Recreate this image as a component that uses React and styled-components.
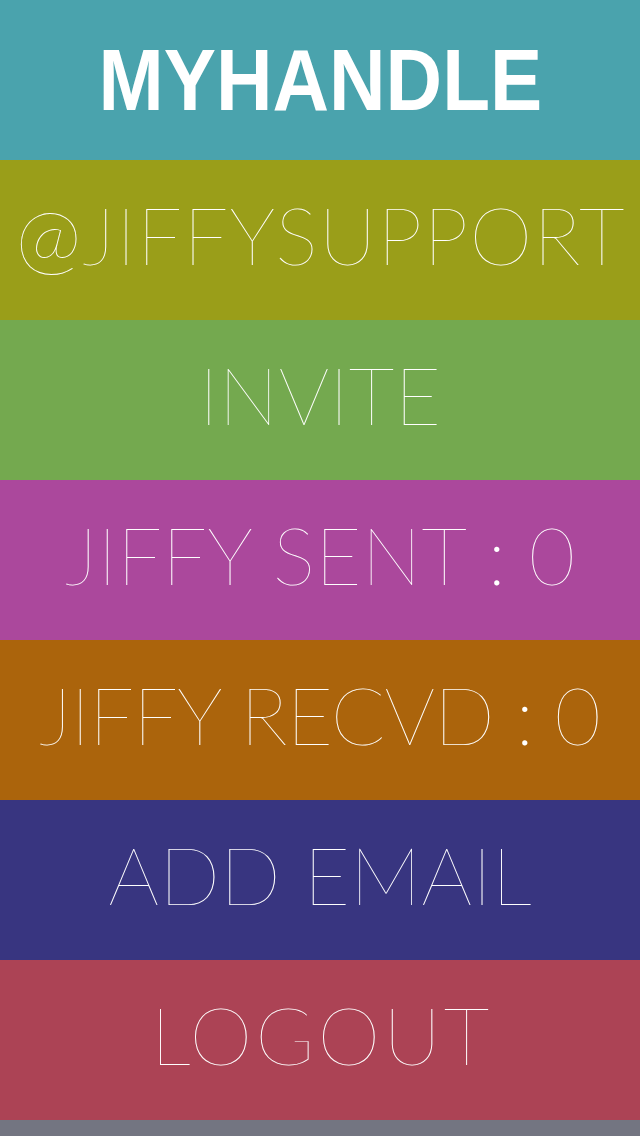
import React from "react";
import styled, { createGlobalStyle } from "styled-components";

const Global = createGlobalStyle`
  html, body { margin: 0; padding: 0; background: #737581; }
  * { box-sizing: border-box; }
`;

const Screen = styled.div`
  width: 640px;
  height: 1136px;
  display: flex;
  flex-direction: column;
  background: #737581;
  overflow: hidden;
`;

const Row = styled.div`
  height: 160px;
  flex: 0 0 160px;
  display: flex;
  align-items: center;
  justify-content: center;
  background: ${(p) => p.$bg};
  color: #ffffff;
  font-family: Lato, "Liberation Sans", sans-serif;
  font-weight: 100;
  font-size: 80px;
  white-space: nowrap;
  line-height: 1;
  padding-bottom: ${(p) => p.$pb ?? 12}px;
`;

const Title = styled.span`
  display: inline-block;
  font-family: "Liberation Sans", sans-serif;
  font-weight: 700;
  font-size: 88px;
  transform: scaleX(0.89);
`;

const Label = styled.span`
  letter-spacing: ${(p) => p.$ls || 0}px;
  margin-right: ${(p) => -(p.$ls || 0)}px;
`;

const rows = [
  { bg: "#9a9e19", text: "@JIFFYSUPPORT", ls: 1.2 },
  { bg: "#74a94f", text: "INVITE", ls: 0 },
  { bg: "#ab489c", text: "JIFFY SENT : 0", ls: 0 },
  { bg: "#ab640c", text: "JIFFY RECVD : 0", ls: -1.1 },
  { bg: "#383580", text: "ADD EMAIL", ls: 0 },
  { bg: "#ac4355", text: "LOGOUT", ls: 3 },
];

export default function App() {
  return (
    <>
      <Global />
      <Screen>
        <Row $bg="#4aa3ad" $pb={0}>
          <Title>MYHANDLE</Title>
        </Row>
        {rows.map((r) => (
          <Row key={r.text} $bg={r.bg}>
            <Label $ls={r.ls}>{r.text}</Label>
          </Row>
        ))}
      </Screen>
    </>
  );
}
